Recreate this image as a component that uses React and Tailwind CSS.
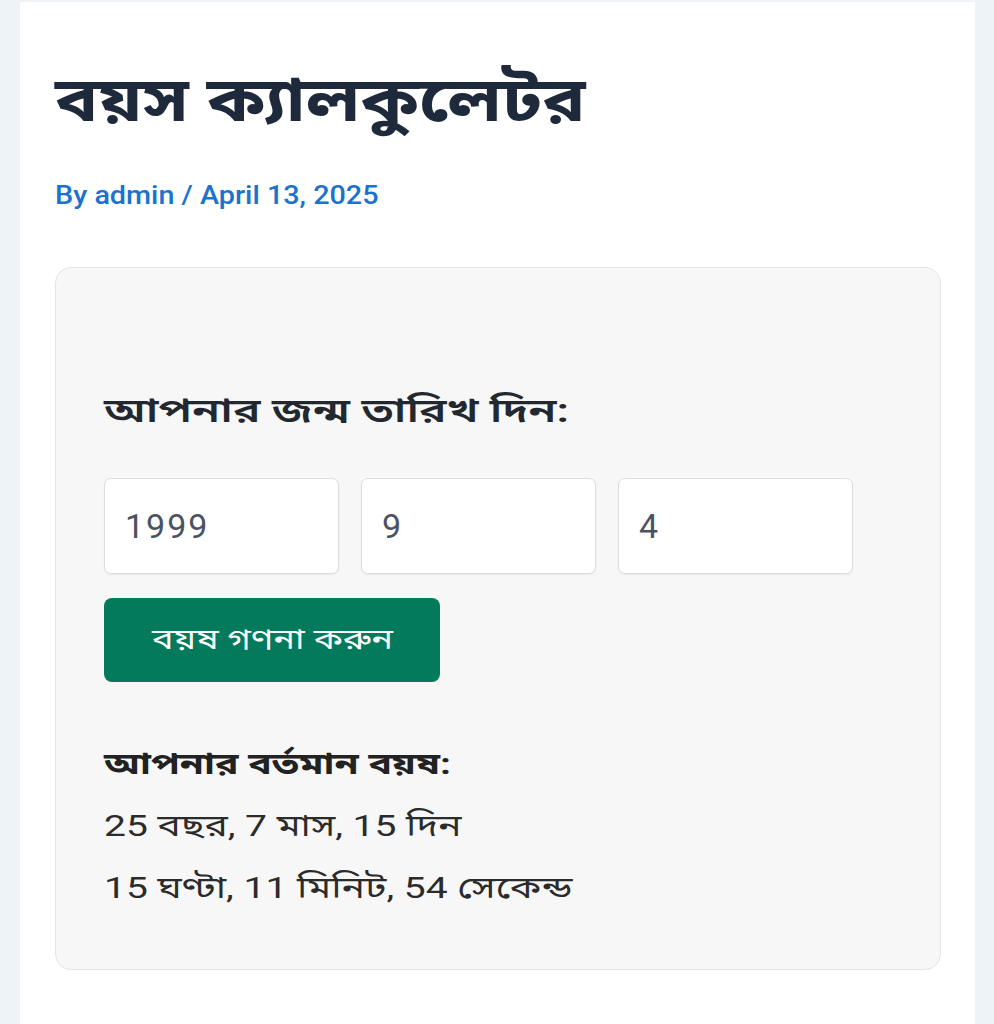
const fields = ["1999", "9", "4"];

const App = () => {
  return (
    <div className="min-h-[1024px] w-full overflow-hidden bg-[#eef3f8] pt-[2px] font-['Roboto','Noto_Sans','Noto_Sans_Bengali',sans-serif]">
      <div className="mx-[20px] min-h-[1022px] w-[955px] bg-white px-[35px] pt-[52px] pb-[40px]">
        <h1 className="m-0 w-fit origin-left scale-x-[1.16] text-[62px] leading-[92px] font-bold text-[#1e293b]">
          বয়স ক্যালকুলেটর
        </h1>
        <div className="mt-[32px] w-fit origin-left scale-x-[1.15] text-[25px] leading-[36px] font-medium text-[#1b72cf]">
          By admin / April 13, 2025
        </div>
        <section className="mt-[53px] w-[886px] rounded-[16px] border border-[#e4e4e4] bg-[#f7f7f7] px-[48px] pt-[112px] pb-[50px]">
          <h2 className="m-0 w-fit origin-left scale-x-[1.35] text-[34px] leading-[60px] font-semibold text-[#23272f]">
            আপনার জন্ম তারিখ দিন:
          </h2>
          <div className="mt-[38px] flex gap-[22px]">
            {fields.map((v) => (
              <input
                key={v}
                defaultValue={v}
                className="h-[96px] w-[235px] rounded-[7px] border border-[#dcdde0] bg-white px-[20px] text-[34px] tracking-[2px] text-[#4a5263] shadow-[0_1px_2px_rgba(0,0,0,0.06)] outline-none"
              />
            ))}
          </div>
          <button className="mt-[24px] flex h-[84px] w-[336px] items-center justify-center rounded-[8px] bg-[#027a5b] text-white">
            <span className="scale-x-[1.29] text-[28px]">বয়ষ গণনা করুন</span>
          </button>
          <div className="mt-[51px] w-fit origin-left scale-x-[1.3] text-[30px] leading-[62px] text-[#2b2b2b]">
            <div className="font-bold text-[#222]">আপনার বর্তমান বয়ষ:</div>
            <div>25 বছর, 7 মাস, 15 দিন</div>
            <div>15 ঘণ্টা, 11 মিনিট, 54 সেকেন্ড</div>
          </div>
        </section>
      </div>
    </div>
  );
};

export default App;
